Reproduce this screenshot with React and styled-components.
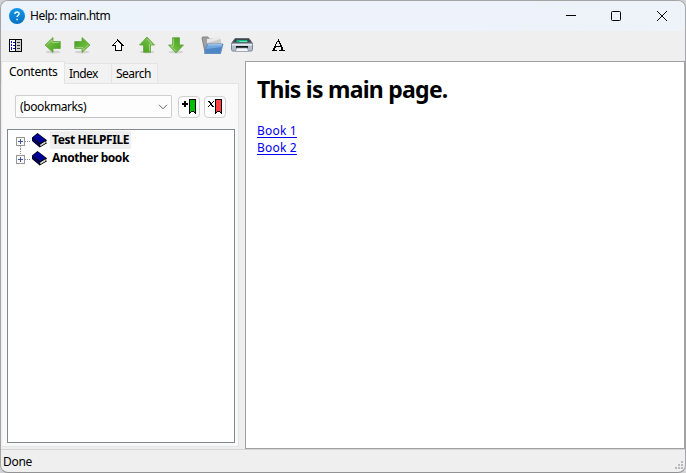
import React from "react";
import styled, { createGlobalStyle } from "styled-components";

const Global = createGlobalStyle`
  *{box-sizing:border-box}
  html,body{margin:0;padding:0;background:#d2d2d4;overflow:hidden}
  body{font:12px/16px "Noto Sans","Open Sans",sans-serif;color:#000}
  svg{display:block;flex:none}
`;
const Label = styled.span`
  white-space:nowrap;
  letter-spacing:${p => p.$ls || 0}px;
`;
const Window = styled.div`
  width:686px;height:473px;border:1px solid #a5a5a8;border-bottom-color:#929294;border-radius:8px;
  background:#efefef;overflow:hidden;display:flex;flex-direction:column;
`;
const TitleBar = styled.header`
  height:30px;flex:none;display:flex;align-items:center;padding-left:8px;
  background:linear-gradient(100deg,#edf3fb,#eef2fb 65%,#edf3f8);
`;
const Title = styled(Label)`margin-left:5px;flex:1;`;
const WinButton = styled.button`
  width:46px;height:30px;padding:0;border:0;background:none;display:grid;place-items:center;
`;
const Toolbar = styled.nav`
  height:30px;flex:none;display:flex;align-items:center;padding:0 0 2px 8px;
`;
const Tool = styled.button`
  width:${p => p.$w}px;height:28px;padding:0;margin-right:${p => p.$gap || 0}px;
  border:0;background:none;
`;
const Body = styled.main`height:388px;flex:none;display:flex;`;
const Side = styled.aside`width:238px;flex:none;display:flex;flex-direction:column;margin-right:6px;`;
const Tabs = styled.div`height:22px;display:flex;align-items:flex-end;flex:none;position:relative;z-index:1;`;
const Tab = styled.button`
  font:inherit;width:${p => p.$w}px;height:${p => (p.$active ? 23 : 20)}px;
  padding:${p => (p.$active ? "0 0 3px 7px" : "1px 0 0 4px")};
  margin-bottom:${p => (p.$active ? -1 : 0)}px;
  text-align:left;border:1px solid #e4e4e4;border-bottom:0;
  border-left-width:${p => (p.$joined ? 0 : 1)}px;
  background:${p => (p.$active ? "#f9f9f9" : "#f2f2f2")};
`;
const TabPage = styled.section`
  height:364px;margin-left:1px;border:1px solid #e4e4e4;border-left-color:#f4f4f4;background:#f9f9f9;padding:11px 3px 4px 4px;
`;
const Bookmarks = styled.div`display:flex;height:24px;padding-left:8px;margin-bottom:10px;`;
const Select = styled.div`
  width:157px;height:23px;border:1px solid #cecece;border-bottom-color:#c4c4c4;border-radius:2px;background:#fdfdfd;
  display:flex;align-items:center;justify-content:space-between;padding:0 3px 0 4px;margin-right:6px;
`;
const MarkButton = styled.button`
  width:22px;height:22px;margin:1px 4px 0 0;padding:0;border:1px solid #d0d0d0;border-radius:4px;background:#fdfdfd;
  display:grid;place-items:center;
`;
const Tree = styled.div`height:314px;width:228px;border:1px solid #828790;background:#fff;padding:1px 0 0 8px;`;
const TreeRow = styled.div`display:flex;height:18px;align-items:center;font-weight:700;`;
const TreeText = styled(Label)`
  height:18px;line-height:18px;padding:0 2px;margin-left:2px;background:${p => (p.$selected ? "#efefef" : "transparent")};
`;
const Page = styled.article`
  width:440px;height:388px;background:#fff;border:1px solid #a0a0a4;padding:12px 0 0 11px;
`;
const Heading = styled.h1`
  margin:0 0 18px;font:700 23px/30px "Noto Sans",sans-serif;letter-spacing:${p => p.$ls}px;
`;
const Links = styled.div`display:flex;flex-direction:column;align-items:flex-start;`;
const PageLink = styled.a`
  color:#0000ee;line-height:17px;height:17px;text-decoration:underline;text-underline-offset:2px;
  letter-spacing:${p => p.$ls}px;
`;
const Status = styled.footer`
  flex:1;border-top:1px solid #d5d5d5;display:flex;justify-content:space-between;align-items:center;padding:1px 0 0 2px;
`;

const HelpIcon = () => (
  <svg width="16" height="16" viewBox="0 0 16 16">
    <defs><linearGradient id="help" x2="0" y2="1"><stop stopColor="#1599e6" /><stop offset="1" stopColor="#0870c3" /></linearGradient></defs>
    <circle cx="8" cy="8" r="8" fill="url(#help)" />
    <path d="M5.9 6c0-2.8 4.4-2.6 4.2-.2C10 7.3 8.1 7.3 8.1 9.1M8.1 10.7v1.5" fill="none" stroke="#fff" strokeWidth="1.4" />
  </svg>
);
const PanelIcon = () => (
  <svg width="13" height="13" shapeRendering="crispEdges">
    <path d="M0 0h13v13H0z" fill="#000" />
    <path d="M1 1h5v11H1z" fill="#fff" />
    <path d="M7 1h5v11H7z" fill="#d0d0d0" />
    <path d="M2 2h1v2H2zM2 5h1v2H2zM2 8h1v3H2zM4 3h2v1H4zM4 6h2v1H4zM4 9h2v1H4z" fill="#0000d0" />
    <path d="M8 3h3v1H8zM8 6h3v1H8zM8 9h3v1H8z" fill="#333" />
  </svg>
);
const GreenArrow = ({ turn }) => (
  <svg width="18" height="18" viewBox="0 0 18 18">
    <defs><linearGradient id={"g" + turn} x1="0" y1="0" x2="1" y2="1"><stop stopColor="#8cc563" /><stop offset=".5" stopColor="#62b436" /><stop offset="1" stopColor="#429a1b" /></linearGradient></defs>
    <ellipse cx="9" cy="16" rx="7.5" ry="1.5" fill="#000" opacity=".12" />
    <path transform={`rotate(${turn} 9 9)`} d="M1 9 9 1.5V5.5H16.3V12.5H9V16.5Z" fill={`url(#g${turn})`} stroke="#61a640" strokeWidth=".8" />
    <path transform={`rotate(${turn} 9 9)`} d="M2.7 9 8 4V6.5H15.3" fill="none" stroke="#b6df98" strokeWidth=".8" opacity=".8" />
  </svg>
);
const UpIcon = () => (
  <svg width="13" height="13" shapeRendering="crispEdges">
    <path d="M5 0h1v1h1v1h1v1h1v1h1v1h1v1h1v1H10v5H3V7H0V6h1V5h1V4h1V3h1V2h1V1h0z" fill="#000" />
    <path d="M5 2h1v1h1v1h1v1h1v1h0v5H4V6H2V5h1V4h1V3h1z" fill="#fff" />
  </svg>
);
const FolderIcon = () => (
  <svg width="23" height="19" viewBox="0 0 23 19">
    <path d="M1 2q0-1 1-1h5l1 2h10v13H4z" fill="#a0a0a0" stroke="#828282" />
    <path d="M6 3 19 1l1 11H6z" fill="#e8e8e8" /><path d="m6 7 14-4v7H5z" fill="#cacaca" />
    <path d="M6 8h16l-2.5 9.5H3.5Z" fill="#74a7de" stroke="#4d7cb7" strokeWidth=".8" />
    <path d="m5.5 13 15.3-2-1.6 6H4.3z" fill="#4d85c5" /><path d="M6.8 8.8H21" stroke="#b3d0ee" />
  </svg>
);
const PrinterIcon = () => (
  <svg width="22" height="15" viewBox="0 0 22 15">
    <path d="M4 .5h14l3.5 5H.5z" fill="#3e464e" stroke="#62696f" />
    <path d="M6 2h10l1 2H5z" fill="#11b381" /><path d="M9 3h7v1H8z" fill="#60eda9" />
    <rect x=".5" y="5" width="21" height="8" rx="1.5" fill="#b4bec9" stroke="#788594" />
    <path d="M1 6h20v1.5H1z" fill="#e5ebf0" /><path d="M5 8h12v3H5z" fill="#16191c" />
    <path d="M5.5 10h11l1 3.5h-13z" fill="#f2f5f8" stroke="#8b969f" strokeWidth=".7" />
  </svg>
);
const FontIcon = () => (
  <svg width="13" height="12" shapeRendering="crispEdges">
    <path d="M6 0h1v2h1v2h1v2h1v2h1v3h2v1H7v-1h2V8H4v1H3v2h2v1H0v-1h1V9h1V7h1V5h1V3h1V2h1zM6 3H5v2H4v2h4V5H7V3z" fillRule="evenodd" />
    <path d="M7 2h1v2h1v2h1v2h1v3H9V8H8V5H7z" />
  </svg>
);
const Ribbon = ({ remove }) => (
  <svg width="16" height="16" shapeRendering="crispEdges">
    <path d="M8 0h7v15h-1v-1h-1v-1h-3v1H9v1H8z" fill="#000" />
    <path d="M9 1h5v12h-1v-1h-3v1H9z" fill={remove ? "#ff4040" : "#00bf00"} />
    {remove
      ? <path d="M1 2h2v1h1v1h1V3h1V2h1v1H6v1H5v2h1v1h1v1H5V7H4V6H3v1H2v1H1V7h1V6h1V4H2V3H1z" />
      : <path d="M3 2h2v2h2v2H5v2H3V6H1V4h2z" />}
  </svg>
);
const TreeNode = ({ last }) => (
  <svg width="15" height="18" shapeRendering="crispEdges">
    <path d={last ? "M4.5 0v5M9 10.5h6" : "M4.5 15v3M9 10.5h6"} stroke="#909090" strokeDasharray="1 1" />
    <rect x=".5" y="6.5" width="8" height="8" fill="#f8f8f8" stroke="#969696" />
    <path d="M2 10.5h5M4.5 8v5" stroke="#3b55a2" />
  </svg>
);
const BookIcon = () => (
  <svg width="17" height="16" viewBox="0 0 17 16">
    <path d="M6.5 1 16 8.2l-.8 1v1.4l.8.6L8.7 15.6 1 9V5.5z" fill="#000" />
    <path d="M6.8 1.8 14.6 8 9.2 11.3 1.5 5.6z" fill="#000098" />
    <path d="M1.3 6.6 8.6 12.6v1.6L1.3 8.5z" fill="#000080" />
    <path d="m9.3 12.4 5.2-3.2v1.9l-5.2 3.2z" fill="#fff" />
    <path d="m9.8 13.2 4.5-2.7" stroke="#aaa" strokeWidth=".6" />
  </svg>
);
const Grip = () => (
  <svg width="10" height="10" shapeRendering="crispEdges">
    <path d="M6 0h2v2H6zM3 3h2v2H3zM6 3h2v2H6zM0 6h2v2H0zM3 6h2v2H3zM6 6h2v2H6z" fill="#b9b9b9" />
  </svg>
);
const GripBox = styled.div`align-self:flex-end;padding:0 0 1px;`;

export default function App() {
  return (
    <>
      <Global />
      <Window>
        <TitleBar>
          <HelpIcon />
          <Title $ls={-0.5}>Help: main.htm</Title>
          <WinButton aria-label="Minimize"><svg width="12" height="10" shapeRendering="crispEdges"><path d="M2 4.5h10" stroke="#000" /></svg></WinButton>
          <WinButton aria-label="Maximize"><svg width="10" height="10"><rect x=".5" y=".5" width="9" height="9" rx="1" fill="none" stroke="#000" /></svg></WinButton>
          <WinButton aria-label="Close"><svg width="10" height="10"><path d="m0 0 10 10M10 0 0 10" stroke="#000" /></svg></WinButton>
        </TitleBar>
        <Toolbar>
          <Tool $w={13} $gap={22} aria-label="Toggle panel"><PanelIcon /></Tool>
          <Tool $w={18} $gap={11} aria-label="Back"><GreenArrow turn={0} /></Tool>
          <Tool $w={18} $gap={21} aria-label="Forward"><GreenArrow turn={180} /></Tool>
          <Tool $w={13} $gap={13} aria-label="Up"><UpIcon /></Tool>
          <Tool $w={18} $gap={11} aria-label="Previous"><GreenArrow turn={90} /></Tool>
          <Tool $w={18} $gap={16} aria-label="Next"><GreenArrow turn={270} /></Tool>
          <Tool $w={23} $gap={7} aria-label="Open"><FolderIcon /></Tool>
          <Tool $w={22} $gap={19} aria-label="Print"><PrinterIcon /></Tool>
          <Tool $w={13} aria-label="Fonts"><FontIcon /></Tool>
        </Toolbar>
        <Body>
          <Side>
            <Tabs>
              <Tab $active $w={64}><Label $ls={-0.3}>Contents</Label></Tab>
              <Tab $w={47} $joined><Label $ls={-0.6}>Index</Label></Tab>
              <Tab $w={46} $joined><Label $ls={-0.5}>Search</Label></Tab>
            </Tabs>
            <TabPage>
              <Bookmarks>
                <Select>
                  <Label $ls={-0.4}>(bookmarks)</Label>
                  <svg width="10" height="6"><path d="m1 .8 4 4 4-4" fill="none" stroke="#666" /></svg>
                </Select>
                <MarkButton aria-label="Add bookmark"><Ribbon /></MarkButton>
                <MarkButton aria-label="Remove bookmark"><Ribbon remove /></MarkButton>
              </Bookmarks>
              <Tree>
                <TreeRow><TreeNode /><BookIcon /><TreeText $selected $ls={-0.4}>Test HELPFILE</TreeText></TreeRow>
                <TreeRow><TreeNode last /><BookIcon /><TreeText $ls={-0.45}>Another book</TreeText></TreeRow>
              </Tree>
            </TabPage>
          </Side>
          <Page>
            <Heading $ls={-0.75}>This is main page.</Heading>
            <Links>
              <PageLink $ls={0.2}>Book 1</PageLink>
              <PageLink $ls={0.2}>Book 2</PageLink>
            </Links>
          </Page>
        </Body>
        <Status><Label $ls={-0.3}>Done</Label><GripBox><Grip /></GripBox></Status>
      </Window>
    </>
  );
}
